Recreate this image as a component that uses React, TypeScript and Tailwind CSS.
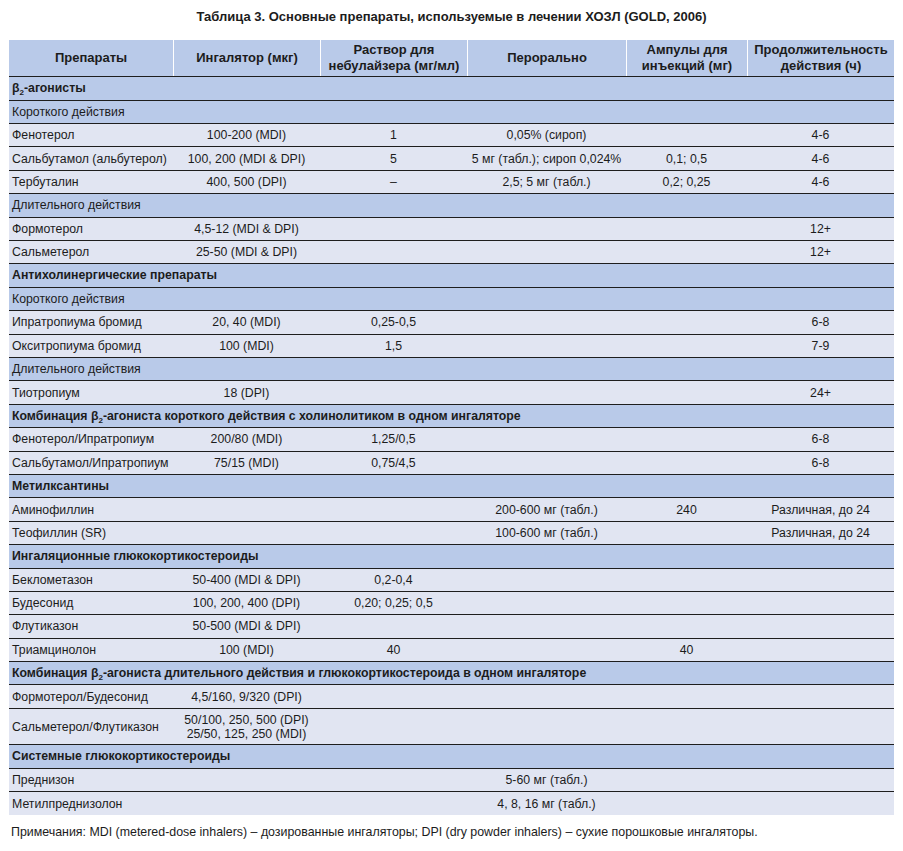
import React from "react";

type Row =
  | { kind: "section"; label: React.ReactNode }
  | { kind: "sub"; label: string }
  | { kind: "data"; cells: React.ReactNode[]; tall?: boolean };

const Beta2 = () => (
  <>
    β<sub className="text-[8px] align-baseline relative top-[3px]">2</sub>
  </>
);

const ROWS: Row[] = [
  { kind: "section", label: <><Beta2 />-агонисты</> },
  { kind: "sub", label: "Короткого действия" },
  { kind: "data", cells: ["Фенотерол", "100-200 (MDI)", "1", "0,05% (сироп)", "", "4-6"] },
  {
    kind: "data",
    cells: ["Сальбутамол (альбутерол)", "100, 200 (MDI & DPI)", "5", "5 мг (табл.); сироп 0,024%", "0,1; 0,5", "4-6"],
  },
  { kind: "data", cells: ["Тербуталин", "400, 500 (DPI)", "–", "2,5; 5 мг (табл.)", "0,2; 0,25", "4-6"] },
  { kind: "sub", label: "Длительного действия" },
  { kind: "data", cells: ["Формотерол", "4,5-12 (MDI & DPI)", "", "", "", "12+"] },
  { kind: "data", cells: ["Сальметерол", "25-50 (MDI & DPI)", "", "", "", "12+"] },
  { kind: "section", label: "Антихолинергические препараты" },
  { kind: "sub", label: "Короткого действия" },
  { kind: "data", cells: ["Ипратропиума бромид", "20, 40 (MDI)", "0,25-0,5", "", "", "6-8"] },
  { kind: "data", cells: ["Окситропиума бромид", "100 (MDI)", "1,5", "", "", "7-9"] },
  { kind: "sub", label: "Длительного действия" },
  { kind: "data", cells: ["Тиотропиум", "18 (DPI)", "", "", "", "24+"] },
  {
    kind: "section",
    label: <>Комбинация <Beta2 />-агониста короткого действия с холинолитиком в одном ингаляторе</>,
  },
  { kind: "data", cells: ["Фенотерол/Ипратропиум", "200/80 (MDI)", "1,25/0,5", "", "", "6-8"] },
  { kind: "data", cells: ["Сальбутамол/Ипратропиум", "75/15 (MDI)", "0,75/4,5", "", "", "6-8"] },
  { kind: "section", label: "Метилксантины" },
  { kind: "data", cells: ["Аминофиллин", "", "", "200-600 мг (табл.)", "240", "Различная, до 24"] },
  { kind: "data", cells: ["Теофиллин (SR)", "", "", "100-600 мг (табл.)", "", "Различная, до 24"] },
  { kind: "section", label: "Ингаляционные глюкокортикостероиды" },
  { kind: "data", cells: ["Беклометазон", "50-400 (MDI & DPI)", "0,2-0,4", "", "", ""] },
  { kind: "data", cells: ["Будесонид", "100, 200, 400 (DPI)", "0,20; 0,25; 0,5", "", "", ""] },
  { kind: "data", cells: ["Флутиказон", "50-500 (MDI & DPI)", "", "", "", ""] },
  { kind: "data", cells: ["Триамцинолон", "100 (MDI)", "40", "", "40", ""] },
  {
    kind: "section",
    label: <>Комбинация <Beta2 />-агониста длительного действия и глюкокортикостероида в одном ингаляторе</>,
  },
  { kind: "data", cells: ["Формотерол/Будесонид", "4,5/160, 9/320 (DPI)", "", "", "", ""] },
  {
    kind: "data",
    tall: true,
    cells: [
      "Сальметерол/Флутиказон",
      <>
        50/100, 250, 500 (DPI)
        <br />
        25/50, 125, 250 (MDI)
      </>,
      "",
      "",
      "",
      "",
    ],
  },
  { kind: "section", label: "Системные глюкокортикостероиды" },
  { kind: "data", cells: ["Преднизон", "", "", "5-60 мг (табл.)", "", ""] },
  { kind: "data", cells: ["Метилпреднизолон", "", "", "4, 8, 16 мг (табл.)", "", ""] },
];

const GRID = "grid grid-cols-[164px_147px_147px_159px_121px_147px]";

export default function App() {
  return (
    <div className="w-[903px] h-[851px] bg-white text-[#1c1c1c] text-[12.3px] font-['Liberation_Sans',Arial,sans-serif] overflow-hidden">
      <h1 className="h-[40px] pt-[8px] text-center font-bold text-[13px] leading-[17px]">
        Таблица 3. Основные препараты, используемые в лечении ХОЗЛ (GOLD, 2006)
      </h1>

      <div className="ml-[9px] w-[885px]">
        {/* header */}
        <div className={`${GRID} h-[37.3px] bg-[#b9cae9] border-b border-[#1e1e1e] font-bold text-[13px] leading-[16px]`}>
          <div className="flex items-center justify-center text-center">Препараты</div>
          <div className="flex items-center justify-center text-center border-l border-white">Ингалятор (мкг)</div>
          <div className="flex items-center justify-center text-center border-l border-white">
            Раствор для
            <br />
            небулайзера (мг/мл)
          </div>
          <div className="flex items-center justify-center text-center border-l border-white">Перорально</div>
          <div className="flex items-center justify-center text-center border-l border-white">
            Ампулы для
            <br />
            инъекций (мг)
          </div>
          <div className="flex items-center justify-center text-center border-l border-white">
            Продолжительность
            <br />
            действия (ч)
          </div>
        </div>

        {ROWS.map((row, i) => {
          const last = i === ROWS.length - 1;
          const line = last ? "" : "border-b border-[#1e1e1e]";
          if (row.kind === "section")
            return (
              <div key={i} className={`h-[23.4px] bg-[#b9cae9] ${line} flex items-center pl-[3px] font-bold`}>
                <span>{row.label}</span>
              </div>
            );
          if (row.kind === "sub")
            return (
              <div key={i} className={`h-[23.4px] bg-[#b9cae9] ${line} flex items-center pl-[3px]`}>
                {row.label}
              </div>
            );
          return (
            <div
              key={i}
              className={`${GRID} ${row.tall ? "h-[36.4px]" : "h-[23.4px]"} bg-[#e1e5f2] ${line} leading-[14px]`}
            >
              {row.cells.map((c, j) => (
                <div
                  key={j}
                  className={
                    j === 0
                      ? "flex items-center pl-[3px] whitespace-nowrap"
                      : "flex items-center justify-center text-center whitespace-nowrap"
                  }
                >
                  <span>{c}</span>
                </div>
              ))}
            </div>
          );
        })}
      </div>

      <p className="mt-[9px] pl-[11px] text-[12.4px] leading-[16px]">
        Примечания: MDI (metered-dose inhalers) – дозированные ингаляторы; DPI (dry powder inhalers) – сухие
        порошковые ингаляторы.
      </p>
    </div>
  );
}
